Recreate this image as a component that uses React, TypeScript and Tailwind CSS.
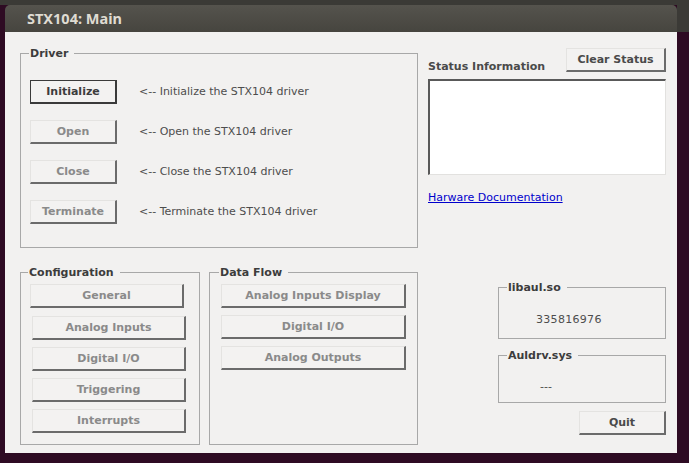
import React from 'react';

type BtnProps = {
    label: string;
    kind?: 'default' | 'enabled' | 'disabled';
    className?: string;
};

const Btn: React.FC<BtnProps> = ({ label, kind = 'disabled', className = '' }) => {
    const look =
        kind === 'default'
            ? 'border border-[#3a3a3a] border-b-2 border-r-2 text-[#3c3c3c]'
            : kind === 'enabled'
                ? 'border-t border-l border-t-[#e4e3e1] border-l-[#e4e3e1] border-b-2 border-r-2 border-b-[#6b6b6b] border-r-[#6b6b6b] text-[#4a4a4a]'
                : 'border-t border-l border-t-[#e4e3e1] border-l-[#e4e3e1] border-b-2 border-r-2 border-b-[#6b6b6b] border-r-[#6b6b6b] text-[#8a8a8a]';
    return (
        <button className={`h-[24px] flex items-center justify-center bg-[#f3f2f1] text-[11px] font-bold leading-none ${look} ${className}`}>
            {label}
        </button>
    );
};

const Legend: React.FC<{ text: string; className?: string }> = ({ text, className = '' }) => (
    <legend className={`pl-[1px] pr-[6px] text-[11px] leading-[13px] font-bold text-[#3c3c3c] ${className}`}>{text}</legend>
);

const driverRows = [
    { label: 'Initialize', kind: 'default' as const },
    { label: 'Open', kind: 'disabled' as const },
    { label: 'Close', kind: 'disabled' as const },
    { label: 'Terminate', kind: 'disabled' as const },
];

const App: React.FC = () => {
    return (
        <div className="w-[689px] h-[463px] overflow-hidden bg-[#2e0b23] font-['DejaVu_Sans',sans-serif]">
            {/* top panel strip */}
            <div className="h-[5px] bg-[#3b3a36]"></div>

            <div className="flex">
                {/* WINDOW */}
                <div className="ml-[5px] w-[672px]">
                    {/* title bar */}
                    <div className="h-[27px] rounded-t-[5px] bg-gradient-to-b from-[#55534d] to-[#46453f] flex items-center pl-[22px]">
                        <span className="font-['Noto_Sans',sans-serif] font-bold text-[14.5px] text-[#dfdbd2] leading-none">STX104: Main</span>
                    </div>

                    {/* body */}
                    <div className="h-[421px] bg-[#f2f1f0] pl-[15px] pr-[11px] pt-[15px]">
                        <div className="grid grid-cols-[398px_238px] gap-x-[10px] gap-y-[18px]">
                            {/* Driver */}
                            <fieldset className="h-[201px] border border-[#a8a8a8] px-[9px] pt-[20px]">
                                <Legend text="Driver" className="-ml-[1px]" />
                                <div className="flex flex-col gap-[16px]">
                                    {driverRows.map((r) => (
                                        <div key={r.label} className="flex items-center gap-[22px]">
                                            <Btn label={r.label} kind={r.kind} className="w-[87px]" />
                                            <span className="text-[11px] text-[#4d4d4d]">&lt;-- {r.label} the STX104 driver</span>
                                        </div>
                                    ))}
                                </div>
                            </fieldset>

                            {/* Status */}
                            <div className="flex flex-col pt-[1px]">
                                <div className="flex items-end justify-between">
                                    <span className="text-[11px] font-bold leading-[13px] text-[#4a4a4a] -mb-[1px]">Status Information</span>
                                    <Btn label="Clear Status" kind="enabled" className="w-[100px]" />
                                </div>
                                <div className="mt-[7px] h-[96px] bg-white border-t-2 border-l-2 border-t-[#595959] border-l-[#595959] border-b border-r border-b-[#e2e1df] border-r-[#e2e1df]"></div>
                                <a className="mt-[16px] text-[11px] leading-[13px] text-[#0000cc] underline self-start">Harware Documentation</a>
                            </div>

                            {/* Configuration + Data Flow */}
                            <div className="flex gap-[9px]">
                                <fieldset className="w-[180px] h-[179px] border border-[#a8a8a8] pt-[5px]">
                                    <Legend text="Configuration" className="ml-[7px]" />
                                    <div className="flex flex-col">
                                        <Btn label="General" className="ml-[9px] w-[154px]" />
                                        <Btn label="Analog Inputs" className="ml-[11px] w-[154px] mt-[8px]" />
                                        <Btn label="Digital I/O" className="ml-[11px] w-[154px] mt-[7px]" />
                                        <Btn label="Triggering" className="ml-[11px] w-[154px] mt-[7px]" />
                                        <Btn label="Interrupts" className="ml-[11px] w-[154px] mt-[7px]" />
                                    </div>
                                </fieldset>
                                <fieldset className="flex-1 h-[179px] border border-[#a8a8a8] px-[11px] pt-[5px]">
                                    <Legend text="Data Flow" className="-ml-[2px]" />
                                    <div className="flex flex-col gap-[8px]">
                                        <Btn label="Analog Inputs Display" />
                                        <Btn label="Digital I/O" className="-mt-[1px]" />
                                        <Btn label="Analog Outputs" className="-mt-[1px]" />
                                    </div>
                                </fieldset>
                            </div>

                            {/* Versions + Quit */}
                            <div className="flex flex-col pt-[15px]">
                                <fieldset className="ml-[70px] w-[168px] h-[58px] border border-[#a8a8a8] pl-[37px] pt-[19px]">
                                    <Legend text="libaul.so" className="ml-[-29px]" />
                                    <span className="block text-[11px] leading-[13px] text-[#4d4d4d] tracking-[0.3px]">335816976</span>
                                </fieldset>
                                <fieldset className="mt-[10px] ml-[70px] w-[168px] h-[54px] border border-[#a8a8a8] pl-[41px] pt-[18px]">
                                    <Legend text="Auldrv.sys" className="ml-[-33px]" />
                                    <span className="block text-[11px] leading-[13px] text-[#4d4d4d]">---</span>
                                </fieldset>
                                <Btn label="Quit" kind="enabled" className="mt-[8px] self-end w-[87px]" />
                            </div>
                        </div>
                    </div>
                </div>

                {/* right of window */}
                <div className="flex-1">
                    <div className="h-[27px] bg-[#3b3a36]"></div>
                </div>
            </div>
        </div>
    );
};

export default App;
